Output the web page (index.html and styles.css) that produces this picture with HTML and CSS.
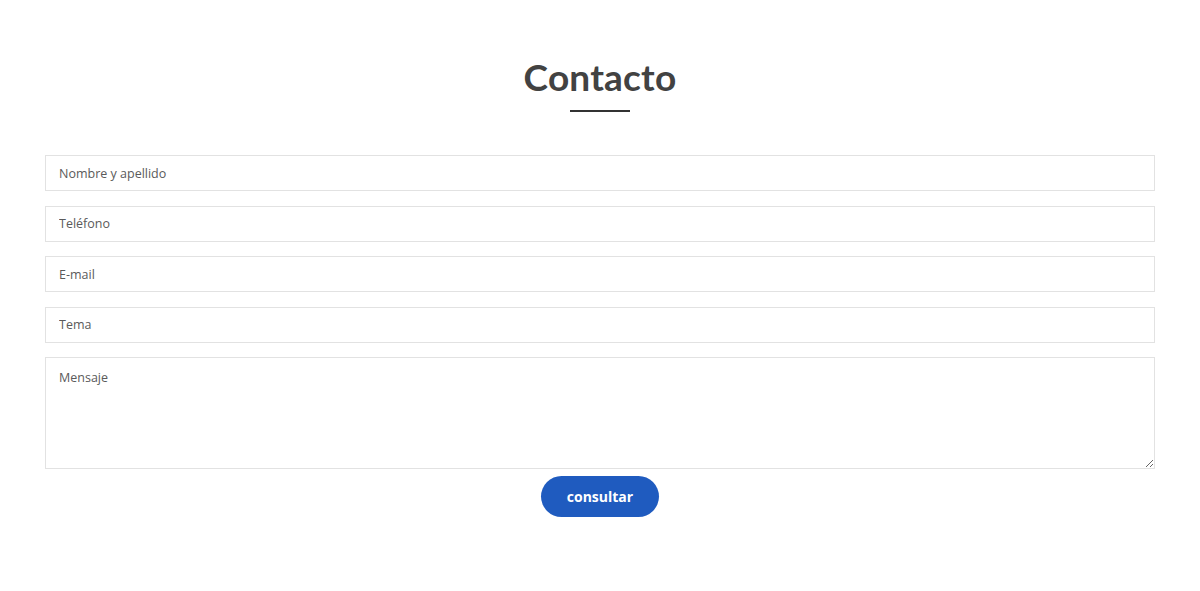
FILE: index.html
```html
<!DOCTYPE html>
<html lang="es">
<head>
<meta charset="utf-8">
<title>Contacto</title>
<link rel="stylesheet" href="styles.css">
</head>
<body>
<section class="contact">
  <h1 class="title">Contacto</h1>
  <div class="rule"></div>
  <form class="form">
    <input class="field" type="text" placeholder="Nombre y apellido">
    <input class="field" type="text" placeholder="Teléfono">
    <input class="field" type="text" placeholder="E-mail">
    <input class="field" type="text" placeholder="Tema">
    <textarea class="field area" placeholder="Mensaje"></textarea>
    <button class="btn" type="button">consultar</button>
  </form>
</section>
</body>
</html>
```
FILE: styles.css
```css
html, body {
  margin: 0;
  padding: 0;
  background: #fff;
}
body {
  font-family: "Open Sans", "Liberation Sans", sans-serif;
}
.contact {
  padding-top: 55px;
  display: flex;
  flex-direction: column;
  align-items: center;
}
.title {
  margin: 0;
  font-family: "Lato", "Open Sans", sans-serif;
  font-weight: 700;
  font-size: 37px;
  line-height: 44px;
  color: #424242;
  letter-spacing: 0.2px;
}
.rule {
  width: 60px;
  height: 2px;
  background: #333;
  margin-top: 11px;
}
.form {
  width: 1110px;
  margin-top: 43px;
  display: flex;
  flex-direction: column;
  align-items: center;
}
.field {
  box-sizing: border-box;
  width: 100%;
  height: 36px;
  margin: 0 0 14.5px 0;
  padding: 0 13px;
  border: 1px solid #e2e2e2;
  background: #fff;
  font-family: "Open Sans", sans-serif;
  font-size: 12.5px;
  color: #555;
  outline: none;
  display: block;
}
.field::placeholder {
  color: #5a5a5a;
  opacity: 1;
}
.area {
  height: 112px;
  padding-top: 11px;
  margin-bottom: 7px;
  resize: vertical;
}
.btn {
  width: 118px;
  height: 41px;
  border: none;
  border-radius: 21px;
  background: #1f5bbf;
  color: #fff;
  font-family: "Open Sans", sans-serif;
  font-weight: 700;
  font-size: 14px;
  cursor: pointer;
  padding: 0;
}
```
